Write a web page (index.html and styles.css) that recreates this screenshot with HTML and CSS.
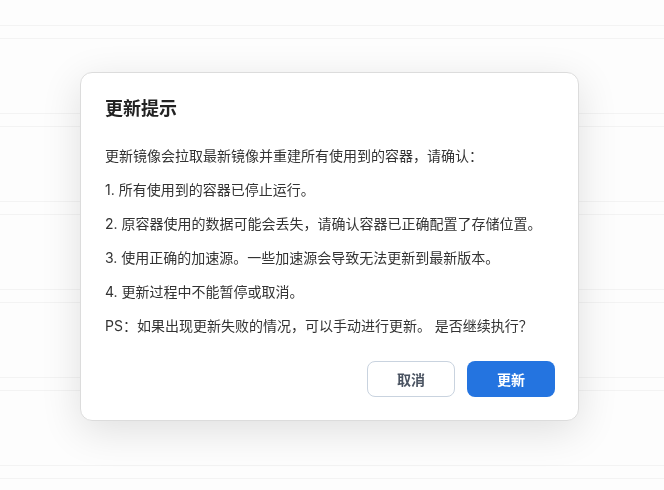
FILE: index.html
```html
<!DOCTYPE html>
<html lang="zh-CN">
<head>
  <meta charset="UTF-8" />
  <title>更新提示</title>
  <meta name="viewport" content="width=device-width, initial-scale=1.0" />
  <link rel="stylesheet" href="styles.css">
</head>
<body>
  <div class="page">
    <div class="row"><div class="row-head"></div></div>
    <div class="row"><div class="row-head"></div></div>
    <div class="row"><div class="row-head"></div></div>
    <div class="row"><div class="row-head"></div></div>
    <div class="row"><div class="row-head"></div></div>
    <div class="row"><div class="row-head"></div></div>
  </div>

  <div class="overlay">
    <div class="dialog">
      <h2 class="dialog-title">更新提示</h2>
      <div class="dialog-body">
        <p>更新镜像会拉取最新镜像并重建所有使用到的容器，请确认：</p>
        <p>1. 所有使用到的容器已停止运行。</p>
        <p>2. 原容器使用的数据可能会丢失，请确认容器已正确配置了存储位置。</p>
        <p>3. 使用正确的加速源。一些加速源会导致无法更新到最新版本。</p>
        <p>4. 更新过程中不能暂停或取消。</p>
        <p>PS：如果出现更新失败的情况，可以手动进行更新。 是否继续执行？</p>
      </div>
      <div class="dialog-footer">
        <button class="btn btn-cancel">取消</button>
        <button class="btn btn-primary">更新</button>
      </div>
    </div>
  </div>
</body>
</html>
```

FILE: styles.css
```css
* {
  box-sizing: border-box;
}

body {
  margin: 0;
  font-family: 'Inter', 'Noto Sans CJK SC', sans-serif;
  background: #fdfdfd;
  color: #333;
}

.page {
  padding-top: 25px;
}

.row {
  height: 88px;
  border-top: 1px solid #f3f3f3;
}

.row:last-child {
  height: auto;
}

.row-head {
  height: 13px;
  border-bottom: 1px solid #f3f3f3;
}

.overlay {
  position: fixed;
  inset: 0;
  display: flex;
  align-items: flex-start;
  padding: 72px 0 0 80px;
}

.dialog {
  width: 499px;
  background: #fff;
  border: 1px solid #dcdcdc;
  border-radius: 12px;
  box-shadow: 0 10px 40px rgba(0, 0, 0, 0.12);
  padding: 23px 23px 23px 24px;
}

.dialog-title {
  margin: 0;
  font-size: 18px;
  line-height: 26px;
  font-weight: 700;
  color: #222;
}

.dialog-body {
  margin-top: 24px;
}

.dialog-body p {
  margin: 0 0 14px;
  font-size: 14px;
  line-height: 20px;
  color: #333;
}

.dialog-body p:last-child {
  margin-bottom: 0;
}

.dialog-footer {
  display: flex;
  justify-content: flex-end;
  gap: 12px;
  margin-top: 25px;
}

.btn {
  width: 88px;
  height: 36px;
  border-radius: 8px;
  font-family: inherit;
  font-size: 14px;
  font-weight: 700;
  cursor: pointer;
}

.btn-cancel {
  background: #fff;
  border: 1px solid #c9d3df;
  color: #4a5361;
}

.btn-primary {
  background: #2474e0;
  border: none;
  color: #fff;
}
```
